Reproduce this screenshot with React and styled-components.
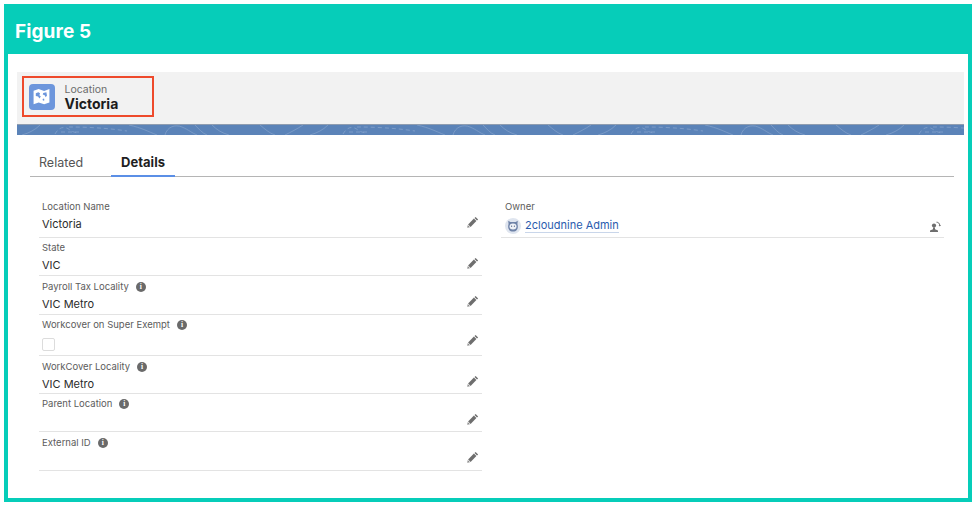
import React from 'react';
import styled, { createGlobalStyle } from 'styled-components';

const GlobalStyle = createGlobalStyle`
  html, body { margin: 0; padding: 0; background: #fff; }
  body { font-family: Inter, "Liberation Sans", sans-serif; }
`

const Frame = styled.div`
  width: 968px;
  height: 498px;
  margin: 4px 0 0 4px;
  box-sizing: border-box;
  border: 4px solid #06cdb9;
  border-top: 0;
  display: flex;
  flex-direction: column;
`
const Banner = styled.div`
  height: 50px;
  margin: 0 -4px;
  flex: none;
  background: #06cdb9;
  color: #fff;
  font-family: Inter, sans-serif;
  font-weight: 700;
  font-size: 19px;
  letter-spacing: 0.1px;
  line-height: 56px;
  padding-left: 11px;
`
const Body = styled.div`
  flex: 1;
  padding: 18px 4px 0 9px;
`
const Highlights = styled.div`
  height: 52px;
  box-sizing: border-box;
  background: #f2f2f2;
  padding: 4px 0 0 5px;
  display: flex;
  align-items: flex-start;
`
const Callout = styled.div`
  width: 132px;
  height: 41px;
  box-sizing: border-box;
  border: 2.5px solid #ee4a2c;
  padding: 5.5px 0 0 4.5px;
  display: flex;
  gap: 10px;
`
const ObjectIcon = styled.div`
  width: 26px;
  height: 26px;
  border-radius: 4px;
  background: #6d96dc;
  display: flex;
  align-items: center;
  justify-content: center;
`
const ObjectText = styled.div`
  display: flex;
  flex-direction: column;
  margin-top: -1px;
`
const ObjectType = styled.span`
  font-size: 10.5px;
  line-height: 13px;
  color: #6b6b6b;
`
const ObjectName = styled.span`
  font-size: 14px;
  line-height: 15px;
  font-weight: 700;
  color: #1c1c1c;
`
const Band = styled.svg`
  display: block;
  width: 947px;
  height: 11px;
  background: #5b83b8;
  border-top: 1px solid #8f9db0;
  box-sizing: border-box;
`
const TabBar = styled.div`
  margin: 17px 10px 0 13px;
  height: 24px;
  border-bottom: 1px solid #b5b5b5;
  display: flex;
  padding-left: 9px;
  gap: 28px;
`
const Tab = styled.div`
  font-size: ${p => (p.$active ? 13 : 12.5)}px;
  line-height: 21px;
  height: 25px;
  box-sizing: border-box;
  font-weight: ${p => (p.$active ? 700 : 400)};
  color: ${p => (p.$active ? '#1f1f1f' : '#555')};
  ${p => p.$active && `
    padding: 0 10px;
    border-bottom: 2px solid #5b8fe6;
  `}
`
const Columns = styled.div`
  margin: 23px 0 0 22px;
  display: grid;
  grid-template-columns: 443px 443px;
  column-gap: 19px;
`
const Column = styled.div`
  display: flex;
  flex-direction: column;
`
const Row = styled.div`
  height: ${p => p.$h}px;
  box-sizing: border-box;
  border-bottom: 1px solid #e3e3e3;
  padding: 0 ${p => p.$pad || 3}px;
  position: relative;
  display: flex;
  flex-direction: column;
`
const Label = styled.div`
  font-size: 9.5px;
  line-height: 13px;
  color: #5c5c5c;
  display: flex;
  align-items: center;
  gap: 7px;
  margin-top: ${p => p.$top || 0}px;
`
const Value = styled.div`
  font-size: 11px;
  line-height: 16px;
  color: #2b2b2b;
  margin-top: 3px;
`
const EditButton = styled.div`
  position: absolute;
  right: 3px;
  bottom: ${p => p.$bottom || 6}px;
  width: 12px;
  height: 12px;
  svg { display: block; }
`
const Checkbox = styled.div`
  width: 13px;
  height: 13px;
  box-sizing: border-box;
  border: 1px solid #dcdcdc;
  border-radius: 2px;
  margin-top: 7px;
`
const InfoBadge = styled.span`
  width: 10px;
  height: 10px;
  border-radius: 50%;
  background: #6a6a6a;
  color: #fff;
  font-size: 7.5px;
  line-height: 10px;
  font-weight: 700;
  text-align: center;
  font-family: "Liberation Serif", serif;
`
const OwnerLine = styled.div`
  display: flex;
  align-items: center;
  gap: 4px;
  margin-top: 5px;
`
const OwnerLink = styled.a`
  font-size: 11px;
  line-height: 13px;
  color: #2a5cae;
  border-bottom: 1px solid #c9d6ea;
`

const Pencil = () => (
  <svg width="12" height="12" viewBox="0 0 12 12">
    <path d="M8.6 0.9 L11.1 3.4 L10 4.5 L7.5 2 Z" fill="#6e6e6e" />
    <path d="M6.9 2.6 L9.4 5.1 L3.6 10.9 L1.1 8.4 Z" fill="#6e6e6e" />
    <path d="M0.8 9 L3 11.2 L0.2 11.8 Z" fill="#8a8a8a" />
  </svg>
)

const ChangeOwner = () => (
  <svg width="12" height="12" viewBox="0 0 12 12">
    <circle cx="5" cy="4.6" r="2.1" fill="#6e6e6e" />
    <path d="M4 6.5 H6 V8.2 L9 9.4 V11 H1 V9.4 L4 8.2 Z" fill="#6e6e6e" />
    <path d="M7.5 1.2 C9.4 1.2 10.6 2.4 10.8 4.4" fill="none" stroke="#6e6e6e" strokeWidth="1" />
    <path d="M9.6 4 L10.8 5.4 L12 4 Z" fill="#6e6e6e" />
  </svg>
)

const MapIcon = () => (
  <svg width="19" height="19" viewBox="0 0 18 18">
    <path d="M1.5 3.5 L6.3 2 L11.5 3.7 L16.5 2 V14.6 L11.5 16.3 L6.3 14.6 L1.5 16.3 Z" fill="#fff" />
    <path d="M3.6 6 L6 5 L7.6 6 L7 7.8 L8.4 9 L7 10.8 L5.8 9 L3.6 8.6 Z" fill="#6d96dc" />
    <path d="M10.6 5.6 L13.6 5 L14.2 8 L13 9.8 L12 7.8 L10.2 7 Z" fill="#6d96dc" />
    <path d="M10 11.4 L11.4 11 L11.8 12.6 L10.4 13 Z" fill="#6d96dc" />
  </svg>
)

const Avatar = () => (
  <svg width="16" height="16" viewBox="0 0 16 16">
    <circle cx="8" cy="8" r="8" fill="#dfe5ef" />
    <path d="M3.2 2.8 L5.4 4 H10.6 L12.8 2.8 L12.4 6 C13.6 9 12.6 13.6 8 13.6 C3.4 13.6 2.4 9 3.6 6 Z" fill="#6f83a8" />
    <ellipse cx="8" cy="8.6" rx="3.5" ry="3" fill="#eef1f6" />
    <circle cx="6.6" cy="8.2" r=".6" fill="#4a5c80" />
    <circle cx="9.4" cy="8.2" r=".6" fill="#4a5c80" />
  </svg>
)

// the contour background repeats about every 288px
const bandLines = [
  'M5 10 C12 8 18 5 23 0',
  'M112 0 C125 3 130 6 140 10',
  'M148 10 C150 2 158 -1 165 2 C172 5 175 8 180 10',
  'M178 0 C182 4 185 8 190 10',
  'M195 0 C200 5 205 8 212 10',
  'M243 0 C248 4 252 8 258 10',
  'M268 10 C274 7 280 4 286 0',
]
const bandDashes = [
  'M38 9 C42 2 48 0 54 6 L60 8',
  'M52 2 C70 2 90 3 110 6',
  'M44 7 L62 7',
]

const Field = ({ label, value, info, h, children, top, bottom }) => (
  <Row $h={h}>
    <Label $top={top}>
      {label}
      {info && <InfoBadge>i</InfoBadge>}
    </Label>
    {value && <Value>{value}</Value>}
    {children}
    <EditButton $bottom={bottom}><Pencil /></EditButton>
  </Row>
)

export default function App() {
  return (
    <>
      <GlobalStyle />
      <Frame>
        <Banner>Figure 5</Banner>
        <Body>
          <Highlights>
            <Callout>
              <ObjectIcon><MapIcon /></ObjectIcon>
              <ObjectText>
                <ObjectType>Location</ObjectType>
                <ObjectName>Victoria</ObjectName>
              </ObjectText>
            </Callout>
          </Highlights>
          <Band viewBox="0 0 947 10" preserveAspectRatio="none">
            <defs>
              <pattern id="topo" width="288" height="10" patternUnits="userSpaceOnUse">
                {bandLines.map(d => (
                  <path key={d} d={d} fill="none" stroke="#7f9ec9" strokeWidth=".8" />
                ))}
                {bandDashes.map(d => (
                  <path key={d} d={d} fill="none" stroke="#7f9ec9" strokeWidth=".9" strokeDasharray="4 3" />
                ))}
              </pattern>
            </defs>
            <rect width="947" height="10" fill="url(#topo)" />
          </Band>
          <TabBar>
            <Tab>Related</Tab>
            <Tab $active>Details</Tab>
          </TabBar>
          <Columns>
            <Column>
              <Field label="Location Name" value="Victoria" h={38} bottom={9} />
              <Field label="State" value="VIC" h={38} top={3} bottom={6} />
              <Field label="Payroll Tax Locality" value="VIC Metro" info h={39} top={4} bottom={7} />
              <Field label="Workcover on Super Exempt" info h={41} top={3} bottom={9}>
                <Checkbox />
              </Field>
              <Field label="WorkCover Locality" value="VIC Metro" info h={38} top={4} bottom={6} />
              <Field label="Parent Location" info h={38} top={3} bottom={6} />
              <Field label="External ID" info h={39} top={4} bottom={7} />
            </Column>
            <Column>
              <Row $h={38} $pad={4}>
                <Label>Owner</Label>
                <OwnerLine>
                  <Avatar />
                  <OwnerLink>2cloudnine Admin</OwnerLink>
                </OwnerLine>
                <EditButton $bottom={4}><ChangeOwner /></EditButton>
              </Row>
            </Column>
          </Columns>
        </Body>
      </Frame>
    </>
  );
}
